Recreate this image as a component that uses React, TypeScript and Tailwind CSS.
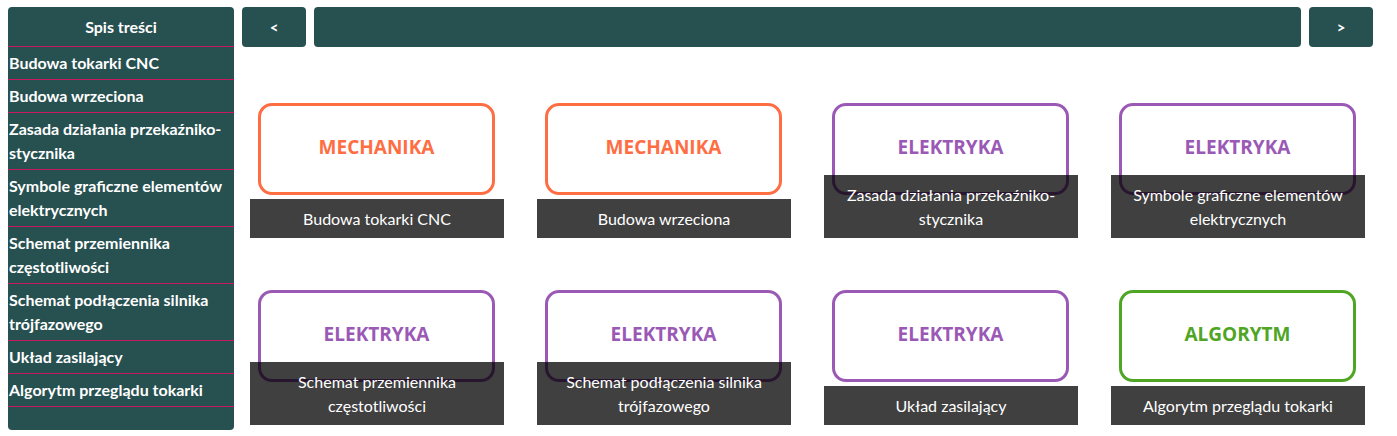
const sections = [
  'Budowa tokarki CNC',
  'Budowa wrzeciona',
  'Zasada działania przekaźniko-stycznika',
  'Symbole graficzne elementów elektrycznych',
  'Schemat przemiennika częstotliwości',
  'Schemat podłączenia silnika trójfazowego',
  'Układ zasilający',
  'Algorytm przeglądu tokarki',
]

type Kind = 'mech' | 'elek' | 'alg'

const cards: { kind: Kind; label: string; caption: string }[] = [
  { kind: 'mech', label: 'MECHANIKA', caption: 'Budowa tokarki CNC' },
  { kind: 'mech', label: 'MECHANIKA', caption: 'Budowa wrzeciona' },
  { kind: 'elek', label: 'ELEKTRYKA', caption: 'Zasada działania przekaźniko-stycznika' },
  { kind: 'elek', label: 'ELEKTRYKA', caption: 'Symbole graficzne elementów elektrycznych' },
  { kind: 'elek', label: 'ELEKTRYKA', caption: 'Schemat przemiennika częstotliwości' },
  { kind: 'elek', label: 'ELEKTRYKA', caption: 'Schemat podłączenia silnika trójfazowego' },
  { kind: 'elek', label: 'ELEKTRYKA', caption: 'Układ zasilający' },
  { kind: 'alg', label: 'ALGORYTM', caption: 'Algorytm przeglądu tokarki' },
]

const boxStyles: Record<Kind, string> = {
  mech: 'border-[#ff6d43] text-[#ff6d43]',
  elek: 'border-[#9b59b6] text-[#9b59b6]',
  alg: 'border-[#4fa524] text-[#4fa524]',
}

export default function App() {
  return (
    <div className="flex gap-2 pl-2 pr-6 pt-[7px] bg-white min-h-[436px] font-['Lato',sans-serif]">
      {/* Table of contents */}
      <aside className="w-[226px] shrink-0 h-[423px] bg-[#275050] rounded text-white">
        <div className="h-10 flex items-center justify-center text-[16px] font-bold border-b border-[#c8195e]">
          Spis treści
        </div>
        <ul>
          {sections.map((s) => (
            <li
              key={s}
              className="px-[1px] py-1 text-[16px] leading-6 font-bold border-b border-[#c8195e]"
            >
              {s}
            </li>
          ))}
        </ul>
      </aside>

      <main className="flex-1 flex flex-col">
        {/* Navigation bar */}
        <div className="flex gap-2 h-10">
          <button className="w-16 rounded bg-[#275050] text-white text-[15px] font-bold">&lt;</button>
          <div className="flex-1 rounded bg-[#275050]" />
          <button className="w-16 rounded bg-[#275050] text-white text-[15px] font-bold">&gt;</button>
        </div>

        {/* Cards */}
        <div className="grid grid-cols-4 gap-x-[33px] gap-y-[52px] px-2 mt-14">
          {cards.map((c, i) => (
            <div key={i} className="relative h-[135px]">
              <div
                className={`ml-2 mr-[9px] h-[92px] pb-1 border-[3px] rounded-[14px] flex items-center justify-center text-[19px] font-bold font-['Open_Sans',sans-serif] ${boxStyles[c.kind]}`}
              >
                {c.label}
              </div>
              <div className="absolute left-0 right-0 bottom-0 bg-black/75 text-white text-center text-[16px] leading-6 py-[7.5px] px-4">
                {c.caption}
              </div>
            </div>
          ))}
        </div>
      </main>
    </div>
  )
}
